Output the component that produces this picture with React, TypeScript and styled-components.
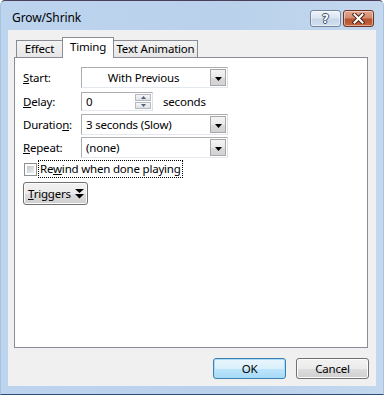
import React from "react";
import styled, { createGlobalStyle } from "styled-components";

const GlobalStyle = createGlobalStyle`
  html, body { margin: 0; padding: 0; background: #ffffff; }
  body {
    font-family: "Noto Sans", "Segoe UI", "Liberation Sans", sans-serif;
    font-size: 11.5px;
    letter-spacing: -0.2px;
    color: #000;
  }
  * { box-sizing: border-box; }
`;

const Win = styled.div`
  width: 384px;
  height: 395px;
  display: flex;
  flex-direction: column;
  background: linear-gradient(90deg, #bcd4ee 0%, #b9d1ea 60%, #c3d8ef 100%);
  border: 1px solid #a9c2de;
  border-top-color: #4b3f5a;
  border-bottom-color: #2f4d70;
  border-radius: 5px 5px 0 0;
  padding: 0 7px 8px 7px;
`;

const TitleBar = styled.div`
  height: 29px;
  display: flex;
  align-items: flex-start;
  padding: 9px 2px 0 4px;
  gap: 2px;
`;

const Title = styled.div`
  flex: 1;
  line-height: 16px;
  font-size: 12px;
  letter-spacing: -0.1px;
`;

const CaptionBtn = styled.div<{ $close?: boolean }>`
  width: 31px;
  height: 17px;
  border-radius: 3px;
  display: flex;
  align-items: center;
  justify-content: center;
  border: 1px solid ${(p) => (p.$close ? "#6e3325" : "#73869e")};
  background: ${(p) =>
    p.$close
      ? "linear-gradient(#e3a891 0%, #d38b70 45%, #b4532f 55%, #c2643f 100%)"
      : "linear-gradient(#edf3f9 0%, #dbe6f2 45%, #c5d6e9 55%, #d3e1ef 100%)"};
  box-shadow: inset 0 0 0 1px rgba(255, 255, 255, 0.45);
`;

const HelpGlyph = styled.span`
  font-family: "DejaVu Sans", sans-serif;
  font-weight: bold;
  font-size: 12px;
  line-height: 12px;
  color: #ffffff;
  text-shadow: -1px 0 #3b4d66, 1px 0 #3b4d66, 0 -1px #3b4d66, 0 1px #3b4d66;
`;

const Client = styled.div`
  flex: 1;
  background: #f0f0f0;
  display: flex;
  flex-direction: column;
  padding: 7px 7px 7px 6px;
`;

const TabStrip = styled.div`
  height: 20px;
  display: flex;
  align-items: flex-end;
  padding-left: 2px;
  position: relative;
  z-index: 1;
`;

const Tab = styled.div<{ $active?: boolean; $w: number }>`
  width: ${(p) => p.$w}px;
  height: ${(p) => (p.$active ? 21 : 17)}px;
  margin-left: -1px;
  margin-bottom: ${(p) => (p.$active ? -1 : 0)}px;
  border: 1px solid #898c95;
  border-bottom: none;
  background: ${(p) =>
    p.$active ? "#ffffff" : "linear-gradient(#f3f3f3, #e6e6e6)"};
  position: relative;
  z-index: ${(p) => (p.$active ? 2 : 1)};
  text-align: center;
  line-height: 15px;
  padding-top: ${(p) => (p.$active ? 1 : 0)}px;
  &:first-child { margin-left: 0; }
`;

const Panel = styled.div`
  flex: 1;
  margin-right: 1px;
  background: #ffffff;
  border: 1px solid #898c95;
  padding: 9px 0 0 8px;
  display: flex;
  flex-direction: column;
`;

const Row = styled.div<{ $h: number; $gap: number }>`
  display: flex;
  align-items: center;
  height: ${(p) => p.$h}px;
  margin-bottom: ${(p) => p.$gap}px;
`;

const Label = styled.div`
  width: 58px;
`;

const Combo = styled.div<{ $center?: boolean }>`
  width: 147px;
  height: 21px;
  border: 1px solid #abadb3;
  border-right-color: #dbdfe6;
  border-bottom-color: #e3e9ef;
  display: flex;
  align-items: center;
  padding: 1px;
  span {
    flex: 1;
    padding-left: ${(p) => (p.$center ? 0 : 3)}px;
    padding-right: ${(p) => (p.$center ? 6 : 0)}px;
    text-align: ${(p) => (p.$center ? "center" : "left")};
  }
`;

const DropBtn = styled.div`
  width: 16px;
  height: 17px;
  border: 1px solid #a7a7a7;
  background: linear-gradient(#f4f4f4 0%, #e9e9e9 50%, #d9d9d9 51%, #d2d2d2 100%);
  display: flex;
  align-items: center;
  justify-content: center;
  padding-top: 2px;
`;

const SpinBox = styled.div`
  width: 72px;
  height: 19px;
  border: 1px solid #abadb3;
  border-right-color: #dbdfe6;
  border-bottom-color: #e3e9ef;
  display: flex;
  align-items: center;
  padding: 1px;
  span { flex: 1; padding-left: 3px; }
`;

const Spinner = styled.div`
  width: 16px;
  height: 15px;
  display: flex;
  flex-direction: column;
  gap: 1px;
`;

const SpinHalf = styled.div`
  flex: 1;
  border: 1px solid #b4b9c2;
  background: linear-gradient(#f6f6f6, #e0e0e0);
  display: flex;
  align-items: center;
  justify-content: center;
`;

const Units = styled.div`
  margin-left: 10px;
`;

const CheckRow = styled.div`
  display: flex;
  align-items: center;
  height: 18px;
  margin-left: 1px;
  margin-bottom: 4px;
`;

const CheckBox = styled.div`
  width: 13px;
  height: 13px;
  border: 1px solid #8e8f8f;
  background: #ffffff;
  padding: 2px;
  &::after {
    content: "";
    display: block;
    width: 7px;
    height: 7px;
    background: linear-gradient(135deg, #c3c7cc, #eceef0);
  }
`;

const FocusLabel = styled.div`
  margin-left: 1px;
  height: 18px;
  line-height: 16px;
  border: 1px dotted #000;
  padding: 0 1px;
`;

const PushButton = styled.div<{ $default?: boolean; $w: number }>`
  width: ${(p) => p.$w}px;
  height: ${(p) => (p.$w < 70 ? 23 : 21)}px;
  border-radius: 3px;
  border: 1px solid ${(p) => (p.$default ? "#3c7fb1" : "#707070")};
  background: ${(p) =>
    p.$default
      ? "linear-gradient(#eaf6fd 0%, #d9f0fc 50%, #bee6fd 51%, #a7d9f5 100%)"
      : "linear-gradient(#f2f2f2 0%, #ebebeb 50%, #dddddd 51%, #cfcfcf 100%)"};
  box-shadow: inset 0 0 0 1px ${(p) => (p.$default ? "#a8dcf7" : "#fcfcfc")};
  display: flex;
  align-items: center;
  justify-content: ${(p) => (p.$w < 70 ? "flex-start" : "center")};
  padding-left: ${(p) => (p.$w < 70 ? 4 : 0)}px;
  gap: 4px;
`;

const TriggerRow = styled.div`
  margin-left: 0px;
`;

const ButtonRow = styled.div`
  display: flex;
  justify-content: flex-end;
  gap: 10px;
  margin-top: 10px;
`;

const DownArrow = () => (
  <svg width="7" height="4" viewBox="0 0 7 4">
    <polygon points="0,0 7,0 3.5,4" fill="#000" />
  </svg>
);

const SmallArrow = ({ up }: { up?: boolean }) => (
  <svg width="5" height="3" viewBox="0 0 5 3">
    <polygon points={up ? "0,3 5,3 2.5,0" : "0,0 5,0 2.5,3"} fill="#4d6185" />
  </svg>
);

const DoubleArrow = () => (
  <svg width="9" height="10" viewBox="0 0 9 10">
    <polygon points="0,0 9,0 4.5,4" fill="#000" />
    <polygon points="0,5 9,5 4.5,9.5" fill="#000" />
  </svg>
);

const CloseGlyph = () => (
  <svg width="13" height="11" viewBox="0 0 13 11">
    <path d="M2.5 1.5 L10.5 9.5 M10.5 1.5 L2.5 9.5" stroke="#4a2418" strokeWidth="4" strokeLinecap="square" />
    <path d="M2.5 1.5 L10.5 9.5 M10.5 1.5 L2.5 9.5" stroke="#ffffff" strokeWidth="2" strokeLinecap="square" />
  </svg>
);

export default function App() {
  return (
    <>
      <GlobalStyle />
      <Win>
        <TitleBar>
          <Title>Grow/Shrink</Title>
          <CaptionBtn>
            <HelpGlyph>?</HelpGlyph>
          </CaptionBtn>
          <CaptionBtn $close>
            <CloseGlyph />
          </CaptionBtn>
        </TitleBar>
        <Client>
          <TabStrip>
            <Tab $w={47}>Effect</Tab>
            <Tab $w={52} $active>Timing</Tab>
            <Tab $w={85}>Text Animation</Tab>
          </TabStrip>
          <Panel>
            <Row $h={21} $gap={4}>
              <Label><u>S</u>tart:</Label>
              <Combo $center>
                <span>With Previous</span>
                <DropBtn><DownArrow /></DropBtn>
              </Combo>
            </Row>
            <Row $h={19} $gap={3}>
              <Label><u>D</u>elay:</Label>
              <SpinBox>
                <span>0</span>
                <Spinner>
                  <SpinHalf><SmallArrow up /></SpinHalf>
                  <SpinHalf><SmallArrow /></SpinHalf>
                </Spinner>
              </SpinBox>
              <Units>seconds</Units>
            </Row>
            <Row $h={21} $gap={2}>
              <Label>Duratio<u>n</u>:</Label>
              <Combo>
                <span>3 seconds (Slow)</span>
                <DropBtn><DownArrow /></DropBtn>
              </Combo>
            </Row>
            <Row $h={21} $gap={2}>
              <Label><u>R</u>epeat:</Label>
              <Combo>
                <span>(none)</span>
                <DropBtn><DownArrow /></DropBtn>
              </Combo>
            </Row>
            <CheckRow>
              <CheckBox />
              <FocusLabel>Re<u>w</u>ind when done playing</FocusLabel>
            </CheckRow>
            <TriggerRow>
              <PushButton $w={65}>
                <span><u>T</u>riggers</span>
                <DoubleArrow />
              </PushButton>
            </TriggerRow>
          </Panel>
          <ButtonRow>
            <PushButton $w={73} $default>OK</PushButton>
            <PushButton $w={73}>Cancel</PushButton>
          </ButtonRow>
        </Client>
      </Win>
    </>
  );
}
